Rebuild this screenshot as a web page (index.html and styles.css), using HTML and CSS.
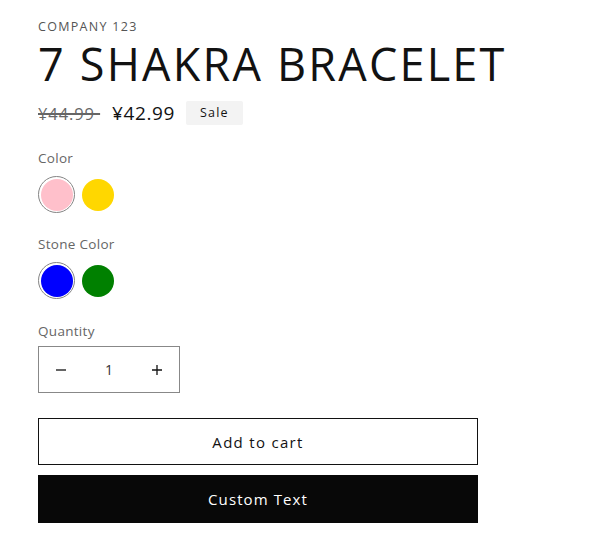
FILE: index.html
```html
<!DOCTYPE html>
<html>
<head>
<meta charset="utf-8">
<link rel="stylesheet" href="styles.css">
</head>
<body>
<div class="product">
  <p class="vendor">COMPANY 123</p>
  <h1 class="title">7 SHAKRA BRACELET</h1>
  <div class="price">
    <s class="price-old">¥44.99&nbsp;</s>
    <span class="price-new">¥42.99</span>
    <span class="badge">Sale</span>
  </div>
  <div class="option">
    <div class="label">Color</div>
    <div class="swatches">
      <span class="swatch selected"><span class="dot pink"></span></span>
      <span class="swatch"><span class="dot yellow"></span></span>
    </div>
  </div>
  <div class="option">
    <div class="label">Stone Color</div>
    <div class="swatches">
      <span class="swatch selected"><span class="dot blue"></span></span>
      <span class="swatch"><span class="dot green"></span></span>
    </div>
  </div>
  <div class="qty-block">
    <div class="label">Quantity</div>
    <div class="qty">
      <span class="qbtn">
        <svg width="12" height="12" viewBox="0 0 12 12"><path d="M1 6h10" stroke="#121212" stroke-width="1.3"/></svg>
      </span>
      <span class="qval">1</span>
      <span class="qbtn">
        <svg width="12" height="12" viewBox="0 0 12 12"><path d="M1 6h10M6 1v10" stroke="#121212" stroke-width="1.3"/></svg>
      </span>
    </div>
  </div>
  <button class="btn cart">Add to cart</button>
  <button class="btn custom">Custom Text</button>
</div>
</body>
</html>
```
FILE: styles.css
```css
html, body { margin: 0; padding: 0; background: #fff; }
body { font-family: "Open Sans", "Noto Sans", sans-serif; color: #121212; }
.product { padding: 19px 0 0 38px; width: 440px; }
.vendor { margin: 0; font-size: 12.5px; letter-spacing: 1.3px; color: #555; line-height: 16px; }
.title { margin: 6px 0 0; font-weight: 400; font-size: 45px; letter-spacing: 2.2px; line-height: 46px; color: #121212; white-space: nowrap; }
.price { display: flex; align-items: center; margin-top: 13px; height: 26px; }
.price-old { font-size: 16.5px; color: #666; letter-spacing: 0.9px; text-decoration-thickness: 1.5px; }
.price-new { font-size: 19px; margin-left: 12px; letter-spacing: 0.6px; }
.badge { margin-left: 11px; background: #f3f3f3; font-size: 12.5px; letter-spacing: 1.2px; padding: 3px 14px 4px 14px; border-radius: 2px; color: #121212; }
.option { margin-top: 23px; }
.option + .option { margin-top: 22px; }
.label { font-size: 13.5px; color: #666; letter-spacing: 0.3px; line-height: 18px; }
.swatches { display: flex; gap: 4px; margin-top: 9px; }
.swatch { width: 37px; height: 37px; border-radius: 50%; display: flex; align-items: center; justify-content: center; box-sizing: border-box; border: 1px solid transparent; }
.swatch.selected { border-color: #858585; }
.dot { width: 32px; height: 32px; border-radius: 50%; display: block; }
.pink { background: #ffc0cb; }
.yellow { background: #ffd700; }
.blue { background: #0000ff; }
.green { background: #008000; }
.qty-block { margin-top: 23px; }
.qty { margin-top: 6px; width: 142px; height: 47px; box-sizing: border-box; border: 1px solid #888; display: flex; align-items: center; justify-content: space-between; }
.qbtn { width: 44px; display: flex; justify-content: center; }
.qval { font-size: 14px; color: #333; }
.btn { display: block; width: 440px; height: 47px; font-family: inherit; font-size: 15px; letter-spacing: 1.3px; cursor: pointer; }
.cart { margin-top: 25px; background: #fff; border: 1px solid #121212; color: #121212; }
.custom { margin-top: 10px; height: 48px; background: #080808; border: none; color: #fff; letter-spacing: 1.1px; }
```
